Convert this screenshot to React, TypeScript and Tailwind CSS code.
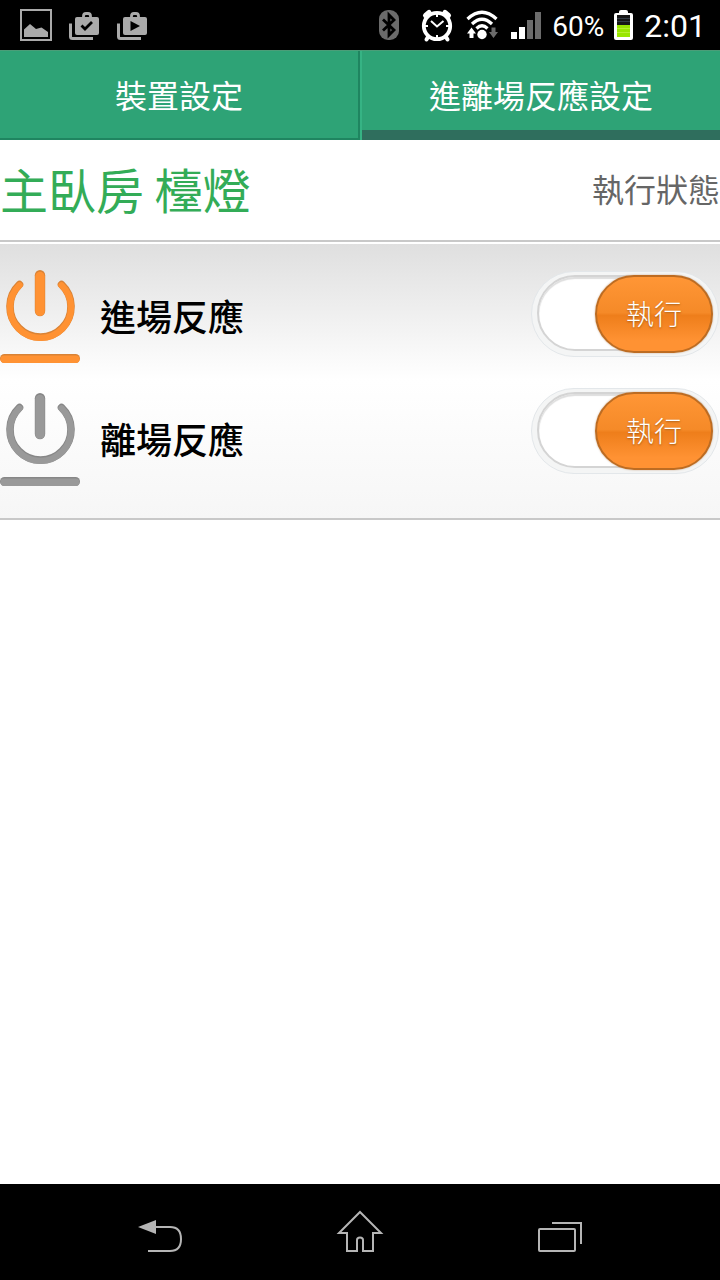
import { useState } from "react";

function StatusBar() {
  return (
    <header className="flex h-[50px] items-center justify-between bg-black pr-3.5 pl-5 font-[Roboto,sans-serif] text-white">
      <div className="flex items-center gap-4 text-[#aaaaaa]">
        <svg width="32" height="32" viewBox="0 0 32 32" fill="none">
          <rect x="1" y="1" width="30" height="30" stroke="currentColor" strokeWidth="2" />
          <path d="M4 28V20.500L10 15L16 20L21.500 18.500L28 23V28Z" fill="currentColor" />
        </svg>
        <StoreBag>
          <path d="M13.500 16.500L17 20L24 13" stroke="black" strokeWidth="2.800" fill="none" />
        </StoreBag>
        <StoreBag>
          <path d="M14.500 12V22L24 17Z" fill="black" />
        </StoreBag>
      </div>
      <div className="flex items-center gap-2.5">
        <svg width="32" height="36" viewBox="0 0 32 36" fill="none">
          <rect x="3" y="3" width="20" height="30" rx="9" fill="#6b6b6b" />
          <path d="M7 12.500L18 23L13 28V8L18 13L7 23.500" stroke="black" strokeWidth="2.800" />
        </svg>
        <svg width="36" height="36" viewBox="0 0 36 36" fill="none">
          <circle cx="19" cy="19" r="13.200" stroke="white" strokeWidth="3.800" />
          <path d="M7.500 8.500L11 5.500M30.500 8.500L27 5.500" stroke="white" strokeWidth="5" strokeLinecap="round" />
          <path d="M10 30L8.500 32.500M28 30L29.500 32.500" stroke="white" strokeWidth="4" strokeLinecap="round" />
          <path d="M13 14L19 19.500L25.500 14" stroke="white" strokeWidth="2" />
          <path d="M19 7V10M19 28V31M7 19H10M28 19H31" stroke="white" strokeWidth="2" />
        </svg>
        <svg width="36" height="36" viewBox="0 0 36 36" fill="none">
          <path d="M3.500 12Q18 -1.500 32.500 12" stroke="white" strokeWidth="3.200" />
          <path d="M8 17Q18 7.500 28 17" stroke="white" strokeWidth="3.200" />
          <path d="M12.500 21.500Q18 16 23.500 21.500" stroke="white" strokeWidth="3.200" />
          <circle cx="18" cy="27.500" r="4.700" fill="white" />
          <path d="M7.500 20.500L12 26.500H9.500V31H5.500V26.500H3Z" fill="white" />
          <path d="M29.500 31L34 25H31.500V20.500H27.500V25H25Z" fill="#6b6b6b" />
        </svg>
        <svg width="32" height="36" viewBox="0 0 32 36">
          <rect x="1" y="25" width="6" height="7" fill="white" />
          <rect x="9" y="20" width="6" height="12" fill="white" />
          <rect x="17" y="13" width="6" height="19" fill="#6b6b6b" />
          <rect x="25" y="5" width="6" height="27" fill="#6b6b6b" />
        </svg>
        <span className="pt-1 text-[28px] leading-8">60%</span>
        <svg width="20" height="36" viewBox="0 0 20 36">
          <rect x="5" y="3" width="9" height="5" rx="2" fill="white" />
          <rect x="0" y="6" width="19" height="27" rx="2" fill="white" />
          <rect x="3" y="8" width="13" height="22" fill="#161616" />
          <path d="M3 11.500H16M3 14.500H16" stroke="#333b46" />
          <rect x="3" y="18" width="13" height="12" fill="#99e600" />
          <path d="M3 21.500H16M3 25.500H16" stroke="#b6ee32" />
        </svg>
        <span className="pt-0.5 text-[32px] leading-8">2:01</span>
      </div>
    </header>
  );
}

function StoreBag({ children }: { children: React.ReactNode }) {
  return (
    <svg width="32" height="32" viewBox="0 0 32 32" fill="none">
      <path d="M2.500 14.500V27.500Q2.500 29.500 4.500 29.500H25" stroke="currentColor" strokeWidth="3" />
      <rect x="7" y="8" width="24" height="18" rx="2" fill="currentColor" />
      <path d="M15.500 9V7Q15.500 4.500 18 4.500H20Q22.500 4.500 22.500 7V9" stroke="currentColor" strokeWidth="2.800" />
      {children}
    </svg>
  );
}

const RING = "M19.500 14.500A30.500 30.500 0 1 0 61.500 14.500";

function PowerIcon({ active }: { active: boolean }) {
  const main = active ? "#ff9233" : "#999999";
  const edge = active ? "#d98336" : "#878787";
  return (
    <svg width="80" height="94" viewBox="0 0 80 94" fill="none" strokeLinecap="round" aria-hidden="true">
      <path d={RING} stroke={edge} strokeWidth="7.600" />
      <path d={RING} stroke={main} strokeWidth="6.400" transform="translate(0 .8)" />
      <path d="M40 5.200V41" stroke={edge} strokeWidth="10.400" />
      <path d="M40 6.500V41.200" stroke={main} strokeWidth="9.400" />
      <rect x="0" y="84" width="80" height="9" rx="4.500" fill={edge} />
      <rect x="0.500" y="85.500" width="79" height="7.500" rx="3.700" fill={main} />
    </svg>
  );
}

function Toggle({ labelledBy }: { labelledBy: string }) {
  const [on, setOn] = useState(true);
  return (
    <label
      className={`relative flex h-[86px] w-[188px] cursor-pointer rounded-full border border-[#e3e7ea] bg-[#f4f5f5] px-[5px] py-[3px] ${
        on ? "justify-end" : "justify-start"
      }`}
    >
      <input
        type="checkbox"
        role="switch"
        aria-labelledby={labelledBy}
        checked={on}
        onChange={(e) => setOn(e.target.checked)}
        className="absolute inset-x-[5px] top-[3px] bottom-[5px] cursor-pointer appearance-none rounded-full border-2 border-[#d4d4d4] bg-white shadow-[inset_0_2px_1px_#dedede]"
      />
      <span className="relative flex h-[78px] w-[118px] items-center justify-center rounded-full border-2 border-[#bd6c22] bg-linear-[180deg,#ff9636_0%,#f58a28_48%,#ee7e1b_52%,#ff9233_86%,#ff9233_100%] pb-0.5 text-[28px] leading-8 font-light text-white shadow-[0_0_2px_#c9a98c] text-shadow-[0_1px_2px_#a35a14]">
        執行
      </span>
    </label>
  );
}

const REACTIONS = [
  { id: "enter", name: "進場反應", active: true },
  { id: "leave", name: "離場反應", active: false },
];

const TABS = [
  { id: "device", name: "裝置設定" },
  { id: "reaction", name: "進離場反應設定" },
];

export default function App() {
  const [tab, setTab] = useState("reaction");
  return (
    <div className="flex min-h-screen flex-col bg-white font-['Noto_Sans_CJK_TC',sans-serif]">
      <StatusBar />
      <nav role="tablist" className="grid h-[90px] grid-cols-2 border-t border-[#4b9d78] bg-[#36b384]">
        {TABS.map((t) => (
          <button
            key={t.id}
            type="button"
            role="tab"
            aria-selected={tab === t.id}
            onClick={() => setTab(t.id)}
            className={`bg-[#2ea376] text-[32px] leading-10 text-white last:ml-0.5 ${
              tab === t.id ? "border-b-10 border-[#2f6e5d] pt-1.5" : "border-r-2 border-b-2 border-[#1f8560] pb-0.5"
            }`}
          >
            {t.name}
          </button>
        ))}
      </nav>
      <main className="flex-1">
        <div className="flex h-[102px] items-center justify-between border-b-2 border-[#c8c8c8] pb-1">
          <h1 className="text-5xl text-[#33ac57]">主臥房 檯燈</h1>
          <span className="text-[32px] leading-10 text-[#666666]">執行狀態</span>
        </div>
        <section className="mt-0.5 flex items-start justify-between border-b-2 border-[#c8c8c8] bg-linear-[180deg,#dfdfdf_0%,#ffffff_50%,#f6f6f6_100%] pr-px">
          <div className="flex flex-col gap-[29px] pt-[26px] pb-[31px]">
            {REACTIONS.map((r) => (
              <div key={r.id} className="flex items-center gap-5">
                <PowerIcon active={r.active} />
                <span id={r.id} className="pb-1 text-4xl font-medium text-black">
                  {r.name}
                </span>
              </div>
            ))}
          </div>
          <div className="flex flex-col gap-[31px] pt-[27px]">
            {REACTIONS.map((r) => (
              <Toggle key={r.id} labelledBy={r.id} />
            ))}
          </div>
        </section>
      </main>
      <footer className="grid h-24 grid-cols-3 bg-black px-15 text-[#b5b5b5]">
        <button type="button" aria-label="返回" className="flex items-center justify-center">
          <svg width="48" height="48" viewBox="0 0 48 48" fill="none" stroke="currentColor" strokeWidth="2">
            <path d="M20 19H34C42 19 45 23 45 31S42 43 34 43H12" />
            <path d="M2 19L20 12V26Z" fill="currentColor" stroke="none" />
          </svg>
        </button>
        <button type="button" aria-label="首頁" className="flex items-center justify-center">
          <svg width="48" height="48" viewBox="0 0 48 48" fill="none" stroke="currentColor" strokeWidth="2">
            <path d="M24 4L45 25H37V43H27V32C27 28.500 21 28.500 21 32V43H11V25H3Z" />
          </svg>
        </button>
        <button type="button" aria-label="最近" className="flex items-center justify-center">
          <svg width="48" height="48" viewBox="0 0 48 48" fill="none" stroke="currentColor" strokeWidth="2">
            <rect x="3" y="21" width="36" height="22" rx="1" />
            <path d="M16 15H45V36" />
          </svg>
        </button>
      </footer>
    </div>
  );
}
